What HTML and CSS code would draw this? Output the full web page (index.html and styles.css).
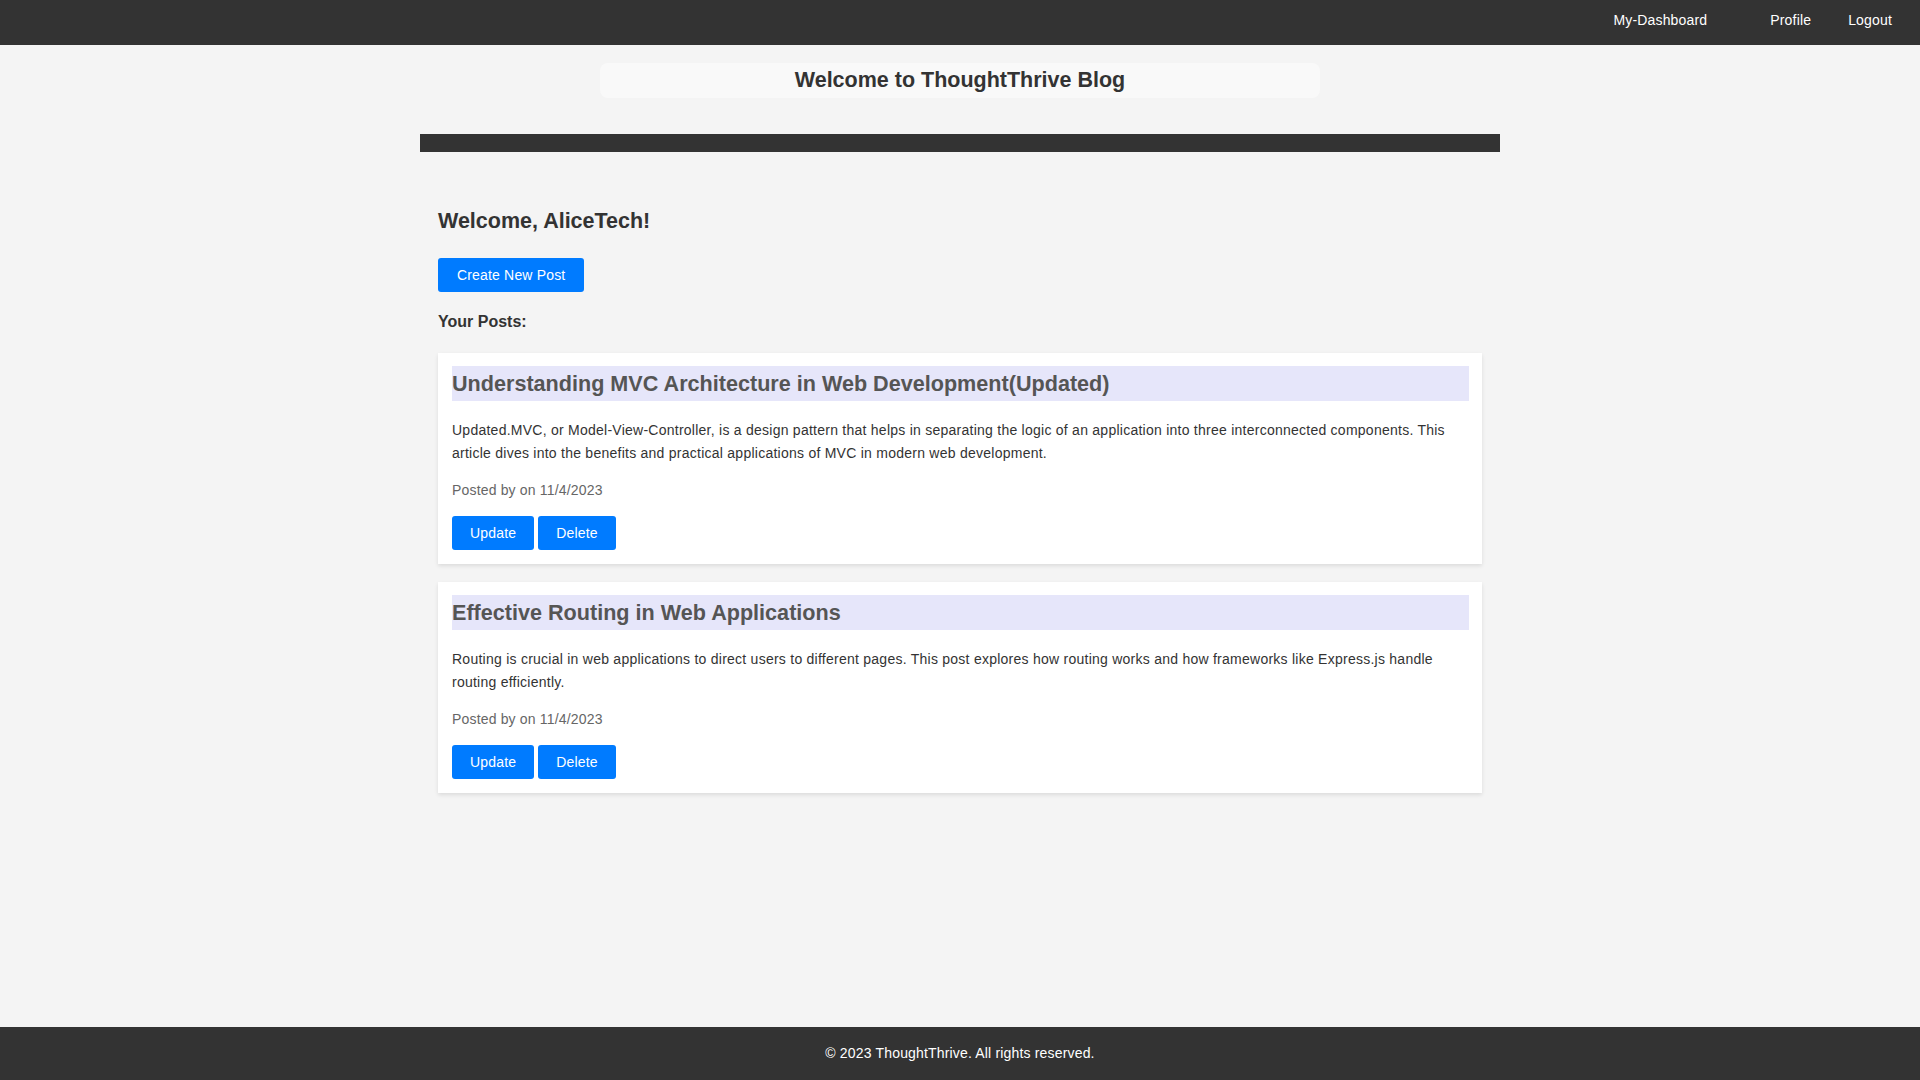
FILE: index.html
```html
<!DOCTYPE html>
<html lang="en">
<head>
<meta charset="utf-8">
<title>ThoughtThrive Blog - Dashboard</title>
<link rel="stylesheet" href="styles.css">
</head>
<body>
<nav class="topnav">
  <a href="#" class="nav-link nav-dashboard">My-Dashboard</a>
  <a href="#" class="nav-link nav-profile">Profile</a>
  <a href="#" class="nav-link nav-logout">Logout</a>
</nav>
<header class="site-header">
  <div class="title-box">
    <h1 class="site-title">Welcome to ThoughtThrive Blog</h1>
  </div>
</header>
<main class="page">
  <div class="bar"></div>
  <section class="dashboard">
    <h2 class="welcome">Welcome, AliceTech!</h2>
    <a href="#" class="btn btn-create">Create New Post</a>
    <h3 class="posts-label">Your Posts:</h3>
    <div class="posts">
      <article class="post-card">
        <h3 class="post-title">Understanding MVC Architecture in Web Development(Updated)</h3>
        <p class="post-body">Updated.MVC, or Model-View-Controller, is a design pattern that helps in separating the logic of an application into three interconnected components. This article dives into the benefits and practical applications of MVC in modern web development.</p>
        <p class="post-meta">Posted by on 11/4/2023</p>
        <div class="post-actions">
          <a href="#" class="btn btn-small">Update</a>
          <a href="#" class="btn btn-small">Delete</a>
        </div>
      </article>
      <article class="post-card">
        <h3 class="post-title">Effective Routing in Web Applications</h3>
        <p class="post-body">Routing is crucial in web applications to direct users to different pages. This post explores how routing works and how frameworks like Express.js handle routing efficiently.</p>
        <p class="post-meta">Posted by on 11/4/2023</p>
        <div class="post-actions">
          <a href="#" class="btn btn-small">Update</a>
          <a href="#" class="btn btn-small">Delete</a>
        </div>
      </article>
    </div>
  </section>
</main>
<footer class="site-footer">
  <p class="footer-text">&copy; 2023 ThoughtThrive. All rights reserved.</p>
</footer>
</body>
</html>
```
FILE: styles.css
```css
* {
  box-sizing: border-box;
}

html, body {
  margin: 0;
  padding: 0;
}

body {
  font-family: "Liberation Sans", Arial, sans-serif;
  background: #f4f4f4;
  color: #333;
  min-height: 100vh;
  display: flex;
  flex-direction: column;
}

.topnav {
  height: 45px;
  background: #333;
  display: flex;
  justify-content: flex-end;
  align-items: flex-start;
  padding: 12px 28px 0 0;
}

.nav-link {
  color: #fff;
  text-decoration: none;
  font-size: 14px;
  line-height: 16px;
  letter-spacing: 0.17px;
}

.nav-dashboard {
  margin-right: 63px;
}

.nav-profile {
  margin-right: 37px;
}

.site-header {
  padding-top: 18px;
}

.title-box {
  width: 720px;
  margin: 0 auto;
  background: #f9f9f9;
  border-radius: 8px;
  height: 35px;
}

.site-title {
  margin: 0;
  font-size: 21.5px;
  line-height: 35px;
  font-weight: bold;
  text-align: center;
  color: #333;
}

.page {
  flex: 1;
  width: 1080px;
  margin: 36px auto 0;
}

.bar {
  height: 18px;
  background: #333;
}

.dashboard {
  padding: 57px 18px 40px;
}

.welcome {
  margin: 0 0 25px;
  font-size: 21.5px;
  line-height: 24px;
  color: #333;
}

.btn {
  display: inline-block;
  background: #007bff;
  color: #fff;
  text-decoration: none;
  font-size: 14px;
  line-height: 16px;
  letter-spacing: 0.17px;
  border-radius: 3px;
}

.btn-create {
  padding: 9px 19px;
}

.posts-label {
  margin: 21px 0 22px;
  font-size: 16px;
  line-height: 18px;
  color: #333;
}

.posts {
  display: flex;
  flex-direction: column;
  gap: 18px;
}

.post-card {
  background: #fff;
  padding: 13px 13px 14px 14px;
  box-shadow: 0 2px 4px rgba(0, 0, 0, 0.1);
}

.post-title {
  margin: 0 0 18px;
  padding: 5px 0;
  background: #e6e6fa;
  color: #555;
  font-size: 21.6px;
  line-height: 25px;
}

.post-body {
  margin: 0 0 14px;
  font-size: 14px;
  line-height: 23px;
  letter-spacing: 0.25px;
  color: #333;
}

.post-meta {
  margin: 0 0 15px;
  font-size: 14px;
  line-height: 22px;
  letter-spacing: 0.17px;
  color: #666;
}

.post-actions {
  display: flex;
  gap: 4px;
}

.btn-small {
  padding: 9px 18px;
}

.site-footer {
  background: #333;
  color: #fff;
  text-align: center;
  padding: 18px 0;
}

.footer-text {
  margin: 0;
  font-size: 14px;
  line-height: 17px;
  letter-spacing: 0.17px;
}
```
